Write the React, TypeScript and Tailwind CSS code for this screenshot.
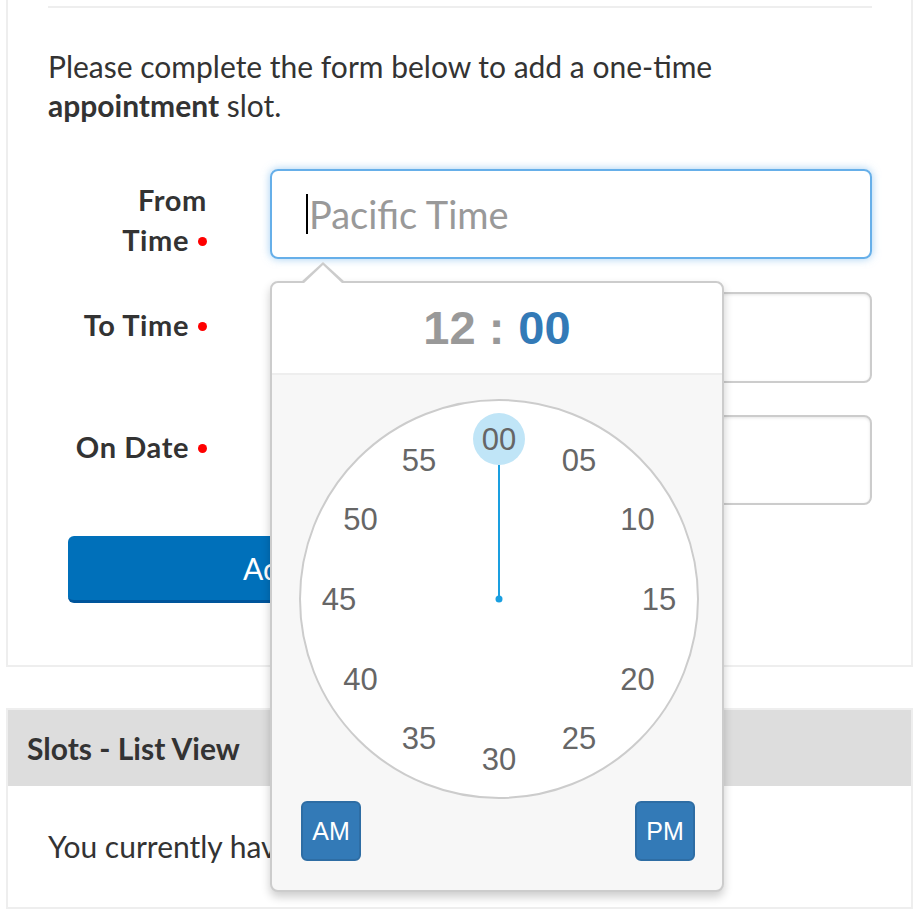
import React from "react";

const Dot = () => (
  <span className="inline-block w-[9px] h-[9px] rounded-full bg-[#ff0000] ml-[9px] align-middle relative top-[-2px]" />
);

const minutes = ["00", "05", "10", "15", "20", "25", "30", "35", "40", "45", "50", "55"];

function Clock() {
  const cx = 200;
  const cy = 200;
  return (
    <svg width="400" height="400" viewBox="0 0 400 400" className="block">
      <circle cx={cx} cy={cy} r={199} fill="#ffffff" stroke="#cccccc" strokeWidth="2" />
      <circle cx={cx} cy={cy - 160} r={26} fill="#c0e5f7" />
      <line x1={cx} y1={cy} x2={cx} y2={cy - 134} stroke="#1a9fe0" strokeWidth="2" />
      <circle cx={cx} cy={cy} r={3.5} fill="#1a9fe0" />
      {minutes.map((m, i) => {
        const a = (i * 30 * Math.PI) / 180;
        const x = cx + Math.sin(a) * 160;
        const y = cy - Math.cos(a) * 160;
        return (
          <text
            key={m}
            x={x}
            y={y + 11}
            textAnchor="middle"
            fontFamily="'Liberation Sans', Arial, sans-serif"
            fontSize="31"
            fill="#666666"
          >
            {m}
          </text>
        );
      })}
    </svg>
  );
}

export default function App() {
  return (
    <div className="relative w-[919px] h-[918px] bg-white overflow-hidden text-[#333] font-['Lato',sans-serif]">
      <div className="px-[6px]">
        {/* Panel 1 */}
        <div className="border-x-2 border-b-2 border-[#eee] pl-[40px] pr-[39px] pb-[62px]">
          <div className="pt-[6px]">
            <div className="h-[2px] bg-[#eee]" />
          </div>
          <p className="mt-[39px] text-[30px] leading-[39px] w-[720px]">
            Please complete the form below to add a one-time <b className="font-bold">appointment</b> slot.
          </p>
          <div className="mt-[44px] flex flex-col gap-[33px]">
            <div className="flex h-[90px]">
              <label className="w-[160px] shrink-0 text-right font-bold text-[29px] tracking-[0.6px] leading-[40px] pt-[11px] pr-[1px]">
                From
                <br />
                Time<Dot />
              </label>
              <div className="ml-[62px] flex-1 h-[90px] rounded-[8px] border-2 border-[#66afe9] shadow-[0_0_8px_rgba(102,175,233,0.6)] flex items-center pl-[34px]">
                <span className="w-[2px] h-[40px] bg-black mr-[1px]" />
                <span className="text-[38px] text-[#999]">Pacific Time</span>
              </div>
            </div>
            <div className="flex h-[90px]">
              <label className="w-[160px] shrink-0 text-right font-bold text-[29px] tracking-[0.6px] leading-[40px] pt-[13px] pr-[1px]">
                To Time<Dot />
              </label>
              <div className="ml-[62px] flex-1 h-[91px] rounded-[8px] border-2 border-[#ccc] shadow-[inset_0_1px_3px_rgba(0,0,0,0.1)]" />
            </div>
            <div className="flex h-[90px]">
              <label className="w-[160px] shrink-0 text-right font-bold text-[29px] tracking-[0.6px] leading-[40px] pt-[12px] pr-[1px]">
                On Date<Dot />
              </label>
              <div className="ml-[62px] flex-1 h-[90px] rounded-[8px] border-2 border-[#ccc] shadow-[inset_0_1px_3px_rgba(0,0,0,0.1)]" />
            </div>
          </div>
          <button className="mt-[31px] ml-[20px] w-[462px] h-[67px] rounded-[6px] bg-[#0070ba] border-b-[3px] border-[#00559b] text-white text-[30px] flex items-center justify-center">
            Add Slot
          </button>
        </div>

        {/* Panel 2 */}
        <div className="mt-[41px] border-2 border-[#eee]">
          <div className="h-[76px] bg-[#ddd] flex items-center pl-[19px] font-bold text-[30px]">
            Slots - List View
          </div>
          <div className="h-[121px] flex items-center pl-[40px] text-[30px]">
            You currently have no appointment slots.
          </div>
        </div>
      </div>

      {/* Clock popover */}
      <div className="absolute left-[270px] top-[281px] w-[454px] h-[611px] rounded-[8px] border-2 border-[#ccc] bg-[#f7f7f7] shadow-[0_5px_10px_rgba(0,0,0,0.2)] flex flex-col">
        <div className="absolute left-[29px] top-[-21px] w-0 h-0 border-x-[22px] border-x-transparent border-b-[20px] border-b-[#ccc]" />
        <div className="absolute left-[31px] top-[-18px] w-0 h-0 border-x-[20px] border-x-transparent border-b-[19px] border-b-white" />
        <div className="h-[92px] bg-white rounded-t-[7px] border-b-2 border-[#eee] flex items-center justify-center font-['Liberation_Sans',Arial,sans-serif] font-bold text-[47px]">
          <span className="text-[#999]">12 :</span>
          <span className="text-[#337ab7] ml-[14px]">00</span>
        </div>
        <div className="flex-1 relative">
          <div className="absolute left-[27px] top-[24px]">
            <Clock />
          </div>
          <button className="absolute left-[29px] top-[426px] w-[60px] h-[60px] rounded-[6px] bg-[#337ab7] border-2 border-[#2e6da4] text-white text-[25px] leading-none font-['Liberation_Sans',Arial,sans-serif] flex items-center justify-center">
            AM
          </button>
          <button className="absolute left-[363px] top-[426px] w-[60px] h-[60px] rounded-[6px] bg-[#337ab7] border-2 border-[#2e6da4] text-white text-[25px] leading-none font-['Liberation_Sans',Arial,sans-serif] flex items-center justify-center">
            PM
          </button>
        </div>
      </div>
    </div>
  );
}
